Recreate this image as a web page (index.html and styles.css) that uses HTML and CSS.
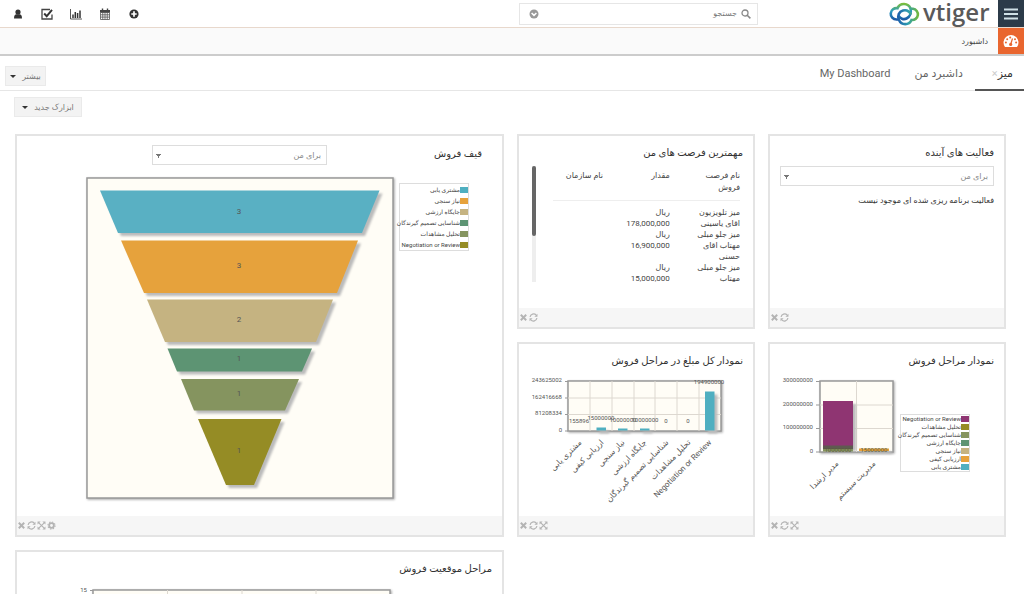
FILE: index.html
```html
<!DOCTYPE html>
<html lang="fa" dir="rtl">
<head>
    <meta charset="UTF-8">
    <meta name="viewport" content="width=device-width, initial-scale=1.0">
    <title>داشبورد</title>
    <link rel="stylesheet" href="styles.css">
</head>
<body>
    <!-- Icons shared by the widgets -->
    <svg class="sprite" aria-hidden="true">
        <symbol id="i-close" viewBox="0 0 10 10">
            <path d="M2 2l6 6M8 2l-6 6" stroke="currentColor" stroke-width="2.2" fill="none"/>
        </symbol>
        <symbol id="i-refresh" viewBox="0 0 10 10">
            <path d="M1.2 4.4A3.9 3.9 0 0 1 8 2.4M8.8 5.6A3.9 3.9 0 0 1 2 7.6" stroke="currentColor" stroke-width="1.3" fill="none"/>
            <path d="M9.4.8v3.4H6zM.6 9.2V5.8H4z" fill="currentColor"/>
        </symbol>
        <symbol id="i-full" viewBox="0 0 10 10">
            <path d="M2 2l6 6M8 2l-6 6" stroke="currentColor" stroke-width="1.3" fill="none"/>
            <path d="M.6.6H4L.6 4zM9.4.6V4L6 .6zM.6 9.4V6L4 9.4zM9.4 9.4H6L9.4 6z" fill="currentColor"/>
        </symbol>
        <symbol id="i-gear" viewBox="0 0 10 10">
            <circle cx="5" cy="5" r="2.6" stroke="currentColor" stroke-width="2" fill="none"/>
            <circle cx="5" cy="5" r="4" stroke="currentColor" stroke-width="1.2" stroke-dasharray="1.57 1.57" fill="none"/>
        </symbol>
    </svg>

    <header class="topbar">
        <button class="menu-button" aria-label="منو">
            <svg viewBox="0 0 14 12"><path d="M0 1.5h14M0 6h14M0 10.5h14" stroke="#cfe0e6" stroke-width="2.2"/></svg>
        </button>
        <a class="logo" href="#" aria-label="vtiger">
            <svg viewBox="0 0 104 26">
                <defs>
                    <linearGradient id="cloud" x1="0" y1="0" x2="0" y2="1">
                        <stop offset="0" stop-color="#79bd3e"/>
                        <stop offset=".45" stop-color="#2a9cc0"/>
                        <stop offset="1" stop-color="#1c5aa5"/>
                    </linearGradient>
                    <linearGradient id="cloud2" x1="0" y1="0" x2="1" y2="0">
                        <stop offset="0" stop-color="#1f62ac"/>
                        <stop offset=".5" stop-color="#2f9fb0"/>
                        <stop offset="1" stop-color="#6fb83f"/>
                    </linearGradient>
                </defs>
                <path d="M10.500 18.500H7.500A5.700 5.700 0 1 1 8.500 7.200A7 7 0 0 1 21.500 7.500C22.500 11 21.500 15.500 17.500 17.500C14.500 19 11 17.500 9.500 14.500" fill="none" stroke="url(#cloud)" stroke-width="2.600"/>
                <path d="M21.500 7.800H24A5.600 5.600 0 1 1 22.500 19A6.800 6.800 0 0 1 10 19C8 15 10 10.500 14 9.500C17.500 8.600 20.500 10.500 22 13.500" fill="none" stroke="url(#cloud2)" stroke-width="2.600"/>
                <text class="logo-text" x="34" y="20">vtiger</text>
            </svg>
        </a>
        <form class="search">
            <svg class="search-icon" viewBox="0 0 10 10"><circle cx="4" cy="4" r="3" fill="none" stroke="#888" stroke-width="1.3"/><path d="M6.2 6.2L9.4 9.4" stroke="#888" stroke-width="1.5"/></svg>
            <input type="text" aria-label="جستجو" placeholder="جستجو">
            <button type="button" class="search-more" aria-label="جستجوی پیشرفته">
                <svg viewBox="0 0 10 10"><circle cx="5" cy="5" r="4.5" fill="#999"/><path d="M2.6 4L5 6.4 7.400 4" fill="none" stroke="#fff" stroke-width="1.5"/></svg>
            </button>
        </form>
        <nav class="top-icons">
            <a href="#" aria-label="افزودن"><svg viewBox="0 0 12 12"><circle cx="6" cy="6" r="4.6" fill="#333"/><path d="M6 3.3v5.4M3.3 6h5.4" stroke="#fff" stroke-width="1.7"/></svg></a>
            <a href="#" aria-label="تقویم"><svg viewBox="0 0 12 12"><path d="M1.5 4.5h9v7h-9zM1.5 6.8h9M1.5 9.1h9M3.75 4.5v7M6 4.5v7M8.25 4.5v7" fill="none" stroke="#555" stroke-width=".8"/><path d="M1 2h10v2.500H1z" fill="#444"/><path d="M3.5.5v2.500M8.5.5v2.500" stroke="#444" stroke-width="1.4"/></svg></a>
            <a href="#" aria-label="گزارش"><svg viewBox="0 0 12 12"><path d="M.5 1v10H12" fill="none" stroke="#444" stroke-width=".9"/><path d="M3 10V6.5M5.3 10V4M7.6 10V5M10 10V2.500" stroke="#333" stroke-width="1.5"/></svg></a>
            <a href="#" aria-label="وظایف"><svg viewBox="0 0 12 12"><path d="M11 6.5V11H1V1.500h8" fill="none" stroke="#444" stroke-width="1.3"/><path d="M3.2 5.5l2.5 2.7L11 1.8" fill="none" stroke="#333" stroke-width="1.9"/></svg></a>
            <a href="#" aria-label="کاربر"><svg viewBox="0 0 12 12"><circle cx="6" cy="4" r="2.6" fill="#333"/><path d="M2 10.5c0-3 1-4 2.5-4.2h3C9 6.5 10 7.5 10 10.5z" fill="#333"/></svg></a>
        </nav>
    </header>

    <div class="module-bar">
        <a class="module-icon" href="#" aria-label="داشبورد">
            <svg viewBox="0 0 16 14"><path d="M2 13A7.500 7.500 0 1 1 14 13z" fill="#fff"/><path d="M7.6 10.5L9.5 4.5" stroke="#e9662f" stroke-width="1.2"/><g fill="#e9662f"><circle cx="7.7" cy="10.4" r="1.6"/><circle cx="2.9" cy="8.5" r="1"/><circle cx="4.2" cy="5.2" r="1"/><circle cx="7.2" cy="3.5" r="1"/><circle cx="12" cy="5.2" r="1"/><circle cx="13.1" cy="8.5" r="1"/></g></svg>
        </a>
        <a class="module-name" href="#">داشبورد</a>
    </div>

    <main>
        <div class="tabs">
            <a class="tab active" href="#">میز<span class="tab-close">×</span></a>
            <a class="tab" href="#">داشبرد من</a>
            <a class="tab" href="#">My Dashboard</a>
            <button class="drop-button more">بیشتر <span class="caret"></span></button>
        </div>
        <div class="toolbar">
            <button class="drop-button add">ابزارک جدید <span class="caret"></span></button>
        </div>

        <div class="grid">
            <section class="widget">
                <h2>فعالیت های آینده</h2>
                <div class="widget-body">
                    <select class="filter" aria-label="فعالیت های آینده"><option>برای من</option></select>
                    <p class="empty">فعالیت برنامه ریزی شده ای موجود نیست</p>
                </div>
                <footer>
                    <button aria-label="بازخوانی"><svg><use href="#i-refresh"/></svg></button>
                    <button aria-label="بستن"><svg><use href="#i-close"/></svg></button>
                </footer>
            </section>

            <section class="widget">
                <h2>مهمترین فرصت های من</h2>
                <div class="widget-body scroll-body">
                    <table>
                        <thead>
                            <tr><th>نام فرصت فروش</th><th>مقدار</th><th class="org">نام سازمان</th></tr>
                        </thead>
                        <tbody>
                            <tr><td>میز تلویزیون اقای یاسینی</td><td>ریال 178,000,000</td><td></td></tr>
                            <tr><td>میز جلو مبلی مهتاب اقای حسنی</td><td>ریال 16,900,000</td><td></td></tr>
                            <tr><td>میز جلو مبلی مهتاب</td><td>ریال 15,000,000</td><td></td></tr>
                        </tbody>
                    </table>
                    <div class="track"><div class="thumb"></div></div>
                </div>
                <footer>
                    <button aria-label="بازخوانی"><svg><use href="#i-refresh"/></svg></button>
                    <button aria-label="بستن"><svg><use href="#i-close"/></svg></button>
                </footer>
            </section>

            <section class="widget large">
                <div class="widget-head">
                    <h2>قیف فروش</h2>
                    <select class="filter" aria-label="قیف فروش"><option>برای من</option></select>
                </div>
                <div class="funnel">
                    <ul class="legend">
                        <li class="c1">مشتری یابی</li>
                        <li class="c2">نیاز سنجی</li>
                        <li class="c3">جایگاه ارزشی</li>
                        <li class="c4">شناسایی تصمیم گیرندگان</li>
                        <li class="c5">تحلیل مشاهدات</li>
                        <li class="c6">Negotiation or Review</li>
                    </ul>
                    <svg class="chart" viewBox="0 0 312 326">
                        <rect class="plot" x="1" y="1" width="306" height="320"/>
                        <g class="shadow">
                            <path fill="#59b0c3" d="M14 13.5H293.5L276 56H32z"/>
                            <path fill="#e6a23c" d="M35 63.5H272L251 116H58z"/>
                            <path fill="#c5b381" d="M61 122.5H247L230 165H79z"/>
                            <path fill="#5d9473" d="M81.5 171.5H226L216 194.5H91z"/>
                            <path fill="#85945f" d="M95 202H213L199 233.5H108z"/>
                            <path fill="#958c25" d="M112 242H195.5L168 308H140z"/>
                        </g>
                        <g class="value" text-anchor="middle">
                            <text x="153" y="37">3</text>
                            <text x="153" y="91">3</text>
                            <text x="153" y="145">2</text>
                            <text x="153" y="184">1</text>
                            <text x="153" y="219">1</text>
                            <text x="153" y="276">1</text>
                        </g>
                    </svg>
                </div>
                <footer>
                    <button aria-label="تنظیمات"><svg><use href="#i-gear"/></svg></button>
                    <button aria-label="تمام صفحه"><svg><use href="#i-full"/></svg></button>
                    <button aria-label="بازخوانی"><svg><use href="#i-refresh"/></svg></button>
                    <button aria-label="بستن"><svg><use href="#i-close"/></svg></button>
                </footer>
            </section>

            <section class="widget">
                <h2>نمودار مراحل فروش</h2>
                <div class="stacked">
                    <ul class="legend tight">
                        <li class="c7">Negotiation or Review</li>
                        <li class="c6">تحلیل مشاهدات</li>
                        <li class="c5">شناسایی تصمیم گیرندگان</li>
                        <li class="c4">جایگاه ارزشی</li>
                        <li class="c3">نیاز سنجی</li>
                        <li class="c2">ارزیابی کیفی</li>
                        <li class="c1">مشتری یابی</li>
                    </ul>
                    <svg class="chart" viewBox="0 0 130 143">
                        <rect class="plot" x="50" y="9" width="73" height="71"/>
                        <path class="gridline" d="M50 33H123M50 56.5H123M86.5 9V80"/>
                        <path class="tick" d="M46 9.5H50M46 33H50M46 56.5H50M46 80H50"/>
                        <g class="shadow">
                            <path fill="#8f3572" d="M53 29H83V76H53z"/>
                            <path fill="#e6a23c" d="M89 76.5H119V79H89z"/>
                        </g>
                        <path fill="#5f5a50" d="M53 73.5H83V77H53z"/>
                        <path fill="#85945f" d="M53 77H83V79.5H53z"/>
                        <g class="axis" text-anchor="end">
                            <text x="43" y="10">300000000</text>
                            <text x="43" y="34">200000000</text>
                            <text x="43" y="57">100000000</text>
                            <text x="43" y="81">0</text>
                        </g>
                        <g class="axis dim" text-anchor="middle">
                            <text x="68" y="80">10000000</text>
                            <text x="104" y="80">15000000</text>
                        </g>
                        <g class="slant" text-anchor="end">
                            <text transform="translate(69 92) rotate(-45)">مدیر ارشدا</text>
                            <text transform="translate(106 92) rotate(-45)">مدیریت سیستم</text>
                        </g>
                    </svg>
                </div>
                <footer>
                    <button aria-label="تمام صفحه"><svg><use href="#i-full"/></svg></button>
                    <button aria-label="بازخوانی"><svg><use href="#i-refresh"/></svg></button>
                    <button aria-label="بستن"><svg><use href="#i-close"/></svg></button>
                </footer>
            </section>

            <section class="widget">
                <h2>نمودار کل مبلغ در مراحل فروش</h2>
                <svg class="chart wide" viewBox="0 0 234 143">
                    <rect class="plot" x="49" y="9" width="153" height="50"/>
                    <path class="gridline" d="M49 26H202M49 42.5H202M71 9V59M93 9V59M115 9V59M136 9V59M158 9V59M180 9V59"/>
                    <path class="tick" d="M46 9.5H49M46 26H49M46 42.5H49M46 59H49"/>
                    <g class="shadow" fill="#4fafc0">
                        <path d="M77.5 55.5H87V58.5H77.5z"/>
                        <path d="M99 56.5H108.5V58.5H99z"/>
                        <path d="M121 56.5H130.5V58.5H121z"/>
                        <path d="M186 19.5H195.5V58.5H186z"/>
                    </g>
                    <g class="axis" text-anchor="end">
                        <text x="43" y="10">243625002</text>
                        <text x="43" y="27">162416668</text>
                        <text x="43" y="43">81208334</text>
                        <text x="43" y="60">0</text>
                    </g>
                    <g class="axis" text-anchor="middle">
                        <text x="60" y="51">155896</text>
                        <text x="82" y="48">15000000</text>
                        <text x="104" y="50">10000000</text>
                        <text x="126" y="50">10000000</text>
                        <text x="147" y="51">0</text>
                        <text x="169" y="51">0</text>
                        <text x="190" y="12">194900000</text>
                    </g>
                    <g class="slant" text-anchor="end">
                        <text transform="translate(63 71) rotate(-45)">مشتری یابی</text>
                        <text transform="translate(85 71) rotate(-45)">ارزیابی کیفی</text>
                        <text transform="translate(106 71) rotate(-45)">نیاز سنجی</text>
                        <text transform="translate(128 71) rotate(-45)">جایگاه ارزشی</text>
                        <text transform="translate(150 71) rotate(-45)">شناسایی تصمیم گیرندگان</text>
                        <text transform="translate(172 71) rotate(-45)">تحلیل مشاهدات</text>
                        <text transform="translate(193 71) rotate(-45)">Negotiation or Review</text>
                    </g>
                </svg>
                <footer>
                    <button aria-label="تمام صفحه"><svg><use href="#i-full"/></svg></button>
                    <button aria-label="بازخوانی"><svg><use href="#i-refresh"/></svg></button>
                    <button aria-label="بستن"><svg><use href="#i-close"/></svg></button>
                </footer>
            </section>

            <section class="widget large left">
                <h2>مراحل موقعیت فروش</h2>
                <svg class="chart wide" viewBox="0 0 485 340">
                    <rect class="plot" x="76" y="10" width="297" height="300"/>
                    <path class="gridline" d="M150.5 10V310M225 10V310M299 10V310"/>
                    <path class="tick" d="M73 10.5H76"/>
                    <g class="axis" text-anchor="end"><text x="70" y="12">15</text></g>
                </svg>
            </section>
        </div>
    </main>
</body>
</html>
```

FILE: styles.css
```css
* {
    box-sizing: border-box;
}

body {
    margin: 0;
    height: 100vh;
    display: flex;
    flex-direction: column;
    font-family: Roboto, "DejaVu Sans", sans-serif;
    font-size: 8px;
    color: #444;
    background-color: #fff;
}

button, input, select {
    font: inherit;
    color: inherit;
    margin: 0;
    padding: 0;
    border: none;
    background: none;
    border-radius: 0;
}

button {
    cursor: pointer;
}

a {
    color: inherit;
    text-decoration: none;
}

svg {
    display: block;
}

.sprite {
    position: absolute;
    width: 0;
    height: 0;
}

/* Top bar */
.topbar {
    display: flex;
    align-items: center;
    flex: none;
    height: 28px;
    border-bottom: 1px solid #e8d8cc;
}

.menu-button {
    display: flex;
    align-items: center;
    justify-content: center;
    width: 26px;
    height: 27px;
    background-color: #2c3b49;
}

.menu-button svg {
    width: 14px;
    height: 12px;
}

.logo {
    margin-right: 5px;
}

.logo svg {
    width: 104px;
    height: 26px;
    direction: ltr;
    overflow: visible;
}

.logo-text {
    font-family: "Open Sans", sans-serif;
    font-size: 24px;
    font-weight: 600;
    fill: #5a5a5a;
}

.search {
    display: flex;
    align-items: center;
    width: 239px;
    height: 22px;
    margin-right: 131px;
    padding: 0 6px 0 9px;
    border: 1px solid #e6e6e6;
}

.search-icon, .search-more svg {
    width: 10px;
    height: 10px;
}

.search input {
    flex: 1;
    min-width: 0;
    padding: 0 4px;
    outline: none;
}

.search input::placeholder {
    color: #777;
}

.top-icons {
    display: flex;
    gap: 17px;
    margin-right: auto;
    padding-left: 12px;
}

.top-icons svg {
    width: 12px;
    height: 12px;
}

/* Module bar */
.module-bar {
    display: flex;
    align-items: center;
    flex: none;
    height: 28px;
    background-color: #fafafa;
    border-bottom: 2px solid #ccc;
}

.module-icon {
    display: flex;
    align-items: center;
    justify-content: center;
    width: 26px;
    height: 26px;
    background-color: #e9662f;
}

.module-icon svg {
    width: 16px;
    height: 14px;
}

.module-name {
    margin-right: 10px;
}

main {
    flex: 1;
    min-height: 0;
    overflow-y: auto;
    scrollbar-width: none;
}

/* Tabs */
.tabs {
    display: flex;
    height: 35px;
    border-bottom: 1px solid #e6e6e6;
    font-size: 11px;
    color: #666;
}

.tab {
    height: 35px;
    padding: 0 12px;
    line-height: 36px;
}

.tab.active {
    padding: 0 11px 0 17px;
    color: #333;
    border-bottom: 2px solid #555;
}

.tab-close {
    color: #ccc;
}

.drop-button {
    display: flex;
    align-items: center;
    justify-content: center;
    gap: 6px;
    height: 20px;
    border: 1px solid #eaeaea;
    background-color: #f3f3f3;
    font-size: 8px;
    color: #777;
}

.caret {
    border: 3px solid transparent;
    border-top-color: #333;
    border-bottom: none;
}

.more {
    width: 41px;
    margin: 10px auto 0 5px;
}

.toolbar {
    display: flex;
    justify-content: flex-end;
    padding: 6px 0 17px 14px;
}

.add {
    width: 68px;
}

/* Widgets */
.grid {
    display: grid;
    grid-template-columns: repeat(4, 1fr);
    grid-auto-rows: minmax(195px, auto);
    gap: 13px;
    padding: 0 18px 13px 15px;
}

.widget {
    display: flex;
    flex-direction: column;
    min-width: 0;
    border: 2px solid #e4e4e4;
    background-color: #fff;
}

.large {
    grid-column: span 2;
    grid-row: span 2;
}

.left {
    grid-column: 3 / span 2;
}

.widget h2 {
    margin: 0;
    padding: 8px 10px 0;
    height: 28px;
    font-size: 10px;
    font-weight: normal;
    line-height: 18px;
    color: #333;
}

.widget footer {
    display: flex;
    justify-content: flex-end;
    align-items: center;
    gap: 1px;
    height: 19px;
    margin-top: auto;
    background-color: #f6f6f6;
    color: #b4b4b4;
}

.widget footer svg {
    width: 9px;
    height: 9px;
}

.widget-body {
    padding: 2px 10px 0;
}

.filter {
    display: block;
    width: 100%;
    height: 20px;
    padding: 0 5px;
    border: 1px solid #ddd;
    appearance: none;
    color: #888;
    background-image: conic-gradient(from -30deg at 50% 100%, #777 60deg, transparent 0);
    background-repeat: no-repeat;
    background-size: 5px 4px;
    background-position: 3px 8px;
}

.empty {
    margin: 10px 0 0;
    color: #333;
}

.scroll-body {
    display: flex;
    height: 118px;
    padding: 2px 13px 0;
    overflow: hidden;
}

.scroll-body table {
    flex: 1;
    align-self: flex-start;
    border-collapse: collapse;
    table-layout: fixed;
    line-height: 11px;
}

.scroll-body th {
    padding: 4px 0 6px 18px;
    border-bottom: 1px solid #eee;
    font-weight: normal;
    line-height: 12px;
    text-align: right;
    vertical-align: top;
}

.scroll-body .org {
    width: 50px;
    padding-left: 0;
    white-space: nowrap;
}

.scroll-body td {
    padding: 0 0 0 18px;
    vertical-align: top;
}

.scroll-body tbody tr:first-child td {
    padding-top: 6px;
}

.track {
    width: 4px;
    margin-right: 17px;
    background-color: #eee;
}

.thumb {
    height: 70px;
    border-radius: 2px;
    background-color: #666;
}

.widget-head {
    display: flex;
    align-items: center;
    padding: 9px 10px 0;
}

.widget-head h2 {
    padding: 0 10px;
    height: 20px;
    width: 165px;
}

.widget-head .filter {
    width: 175px;
}

/* Charts */
.chart {
    flex: none;
    direction: ltr;
    overflow: visible;
}

.chart.wide {
    width: 100%;
}

.funnel {
    display: flex;
    align-items: flex-start;
    gap: 1px;
    padding: 12px 33px 0 0;
}

.funnel .chart {
    width: 312px;
}

.stacked {
    display: flex;
    align-items: flex-start;
    padding-right: 34px;
}

.stacked .chart {
    width: 130px;
}

.plot {
    fill: #fffdf6;
    stroke: #999;
    stroke-width: 1.5px;
    filter: drop-shadow(1px 1px 1px #aaa);
}

.shadow path {
    filter: drop-shadow(3px 3px 1px #bbb);
}

.gridline {
    fill: none;
    stroke: #ddd8d0;
}

.tick {
    stroke: #999;
}

.value {
    font-size: 8px;
    fill: #555;
}

.axis {
    font-size: 6px;
    fill: #555;
}

.dim {
    fill: #5a5a3a;
}

.slant {
    font-size: 8px;
    fill: #555;
}

.legend {
    flex: none;
    width: 70px;
    margin: 6px 0 0;
    padding: 0;
    list-style: none;
    border: 1px solid #ddd;
    font-size: 6px;
    line-height: 11px;
    white-space: nowrap;
}

.legend li {
    display: flex;
    align-items: center;
}

.legend li::before {
    content: "";
    flex: none;
    width: 8px;
    height: 6px;
    background-color: var(--swatch);
}

.legend.tight {
    margin-top: 42px;
    line-height: 8px;
}

.c1 { --swatch: #4fafc0; }
.c2 { --swatch: #e6a23c; }
.c3 { --swatch: #c5b381; }
.c4 { --swatch: #5d9473; }
.c5 { --swatch: #85945f; }
.c6 { --swatch: #958c25; }
.c7 { --swatch: #8f3572; }
```
